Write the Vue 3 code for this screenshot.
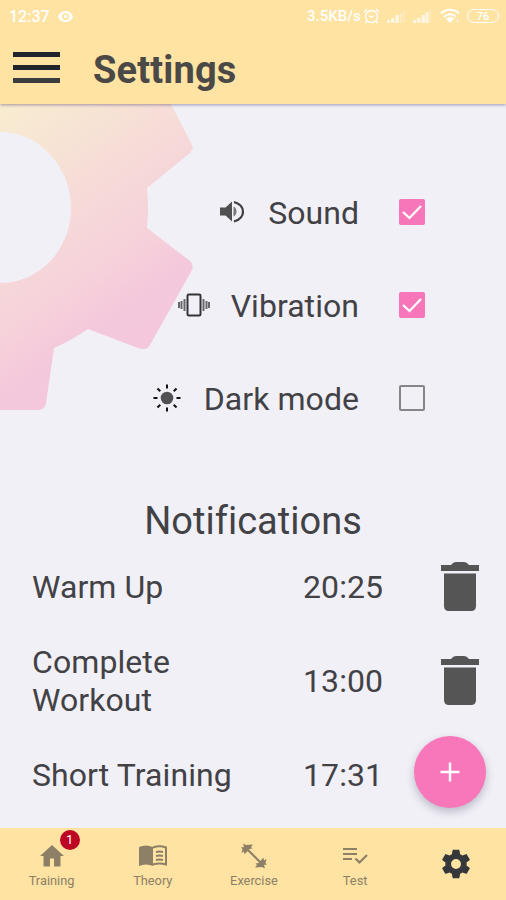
<script setup>
import { ref } from 'vue'

const options = ref([
  { label: 'Sound', icon: 'sound', on: true },
  { label: 'Vibration', icon: 'vibration', on: true },
  { label: 'Dark mode', icon: 'sun', on: false },
])
const notifications = [
  { name: 'Warm Up', time: '20:25', removable: true },
  { name: 'Complete Workout', time: '13:00', removable: true },
  { name: 'Short Training', time: '17:31', removable: false },
]
const tabs = [
  { label: 'Training', icon: 'home', badge: 1 },
  { label: 'Theory', icon: 'book' },
  { label: 'Exercise', icon: 'dumbbell' },
  { label: 'Test', icon: 'list' },
  { label: '', icon: 'gear' },
]
const rays = [0, 45, 90, 135, 180, 225, 270, 315]
</script>

<template>
  <div class="screen">
    <header class="top">
      <div class="status">
        <span class="clock">12:37</span>
        <svg class="eye" width="15" height="11" viewBox="0 0 15 11"><path fill="#fff" fill-rule="evenodd" d="M7.5 0C4 0 1.2 2.200 0 5.500c1.200 3.300 4 5.500 7.500 5.500s6.300-2.200 7.500-5.500C13.800 2.200 11 0 7.500 0zm0 9a3.500 3.500 0 1 1 0-7 3.500 3.500 0 0 1 0 7zm0-5.300a1.800 1.800 0 1 0 0 3.600 1.800 1.800 0 0 0 0-3.600z" /></svg>
        <span class="rate">3.5KB/s</span>
        <svg class="alarm" width="17" height="16" viewBox="0 0 17 16" fill="none" stroke="#fff" stroke-width="1.400"><circle cx="8.500" cy="8.500" r="6" /><path d="M1 4l3-3M16 4l-3-3M5.800 7.500l2.700 2 2.700-2M4 13l-1.300 2M13 13l1.300 2" /></svg>
        <svg class="signal" width="19" height="13" viewBox="0 0 19 13" fill="#fff"><path d="M0 10h3v3H0zM4 8h3.500v5H4zM8.500 5H12v8H8.500z" /><path opacity=".4" d="M13 3h2.500v10H13zM16.500 0H18v13h-1.500z" /></svg>
        <svg class="signal second" width="19" height="13" viewBox="0 0 19 13" fill="#fff"><path d="M0 10h3v3H0zM4 8h3.500v5H4zM8.500 5H12v8H8.500zM12.500 2h3v11h-3z" /><path opacity=".4" d="M16.500 0H18v13h-1.500z" /></svg>
        <svg class="wifi" width="20" height="16" viewBox="0 0 20 16" fill="none" stroke="#fff" stroke-width="2"><path d="M1 5.500c5-5 13-5 18 0M4 8.700c3.500-3.300 8.500-3.300 12 0" /><path fill="#fff" stroke="none" d="M5.800 10.600c2.600-2 5.800-2 8.400 0L10 15z" /><path stroke-width="1.200" opacity=".6" d="M17.500 11v4" /></svg>
        <span class="battery">76</span>
      </div>
      <div class="bar">
        <div class="burger"><i /><i /><i /></div>
        <h1>Settings</h1>
      </div>
    </header>

    <main class="content">
      <svg class="cog" width="200" height="310" viewBox="0 104 200 310">
        <defs>
          <linearGradient id="cogFill" gradientUnits="userSpaceOnUse" x1="0" y1="104" x2="156" y2="320">
            <stop offset="0" stop-color="#f8edd0" />
            <stop offset=".45" stop-color="#f6dbd8" />
            <stop offset=".72" stop-color="#f6d1da" />
            <stop offset=".9" stop-color="#f4c8dc" />
            <stop offset="1" stop-color="#f4c7dd" />
          </linearGradient>
        </defs>
        <path fill="url(#cogFill)" fill-rule="evenodd" d="M0 104H171L192 145Q194 149 190 153L147 188Q149 208 147 228L190 261Q194 265 192 270L150 345Q147 351 138 348L88 329Q72 340 54 348L46 403Q45 410 38 410H0ZM0 132V283C40 283 71 249 71 208S40 132 0 132Z" />
      </svg>

      <section class="options">
        <label v-for="o in options" :key="o.label" class="option">
          <svg v-if="o.icon === 'sound'" class="sound" width="32" height="28" viewBox="0 0 32 28"><path fill="#505052" d="M4 9.500h5.500l6.500-6v20l-6.500-6H4z" /><path fill="#77777a" d="M17.500 8.500c4 1.800 4 8.200 0 10z" /><path fill="none" stroke="#3d3d40" stroke-width="2.200" d="M18 4c12 3.500 12 16 0 19.500" /></svg>
          <svg v-else-if="o.icon === 'vibration'" width="32" height="28" viewBox="0 0 32 28" fill="none"><rect x="9.500" y="3.500" width="13" height="21" rx="1.200" stroke="#343436" stroke-width="2" /><path stroke="#68686b" stroke-width="2" d="M6.500 8v12M3.500 10v8M25.500 8v12M28.500 10v8M1 11v6M31 11v6" /></svg>
          <svg v-else width="32" height="28" viewBox="0 0 32 28"><circle cx="16" cy="14" r="6.300" fill="#515154" /><path v-for="r in rays" :key="r" d="M16 .500v4" stroke="#111" stroke-width="2" :transform="`rotate(${r} 16 14)`" /></svg>
          <span class="option-label">{{ o.label }}</span>
          <input v-model="o.on" type="checkbox" class="native" />
          <span class="check" :class="{ on: o.on }">
            <svg v-if="o.on" width="26" height="26" viewBox="0 0 26 26" fill="none" stroke="#fff" stroke-width="2.300"><path d="M4 13l6.500 6L22 7" /></svg>
          </span>
        </label>
      </section>

      <section class="notifications">
        <h2>Notifications</h2>
        <div v-for="n in notifications" :key="n.name" class="row">
          <span class="name">{{ n.name }}</span>
          <span class="time">{{ n.time }}</span>
          <svg v-if="n.removable" class="trash" width="38" height="50" viewBox="0 0 38 50" fill="#555556"><path d="M0 3h10q2-3 5-3h8q3 0 5 3h10v6H0zM3 11.500h32V44q0 5-5 5H8q-5 0-5-5z" /></svg>
        </div>
      </section>
    </main>

    <button class="fab" aria-label="Add">
      <svg width="20" height="20" viewBox="0 0 20 20" stroke="#fff" stroke-width="2.400"><path d="M10 .500v19M.500 10h19" /></svg>
    </button>

    <nav class="tabs">
      <div v-for="t in tabs" :key="t.icon" class="tab" :class="t.icon">
        <div class="tab-icon">
          <svg v-if="t.icon === 'home'" width="24" height="22" viewBox="0 0 24 22"><path fill="#8d8067" d="M12 0l12 11h-3.500v10.500H14v-8h-4v8H3.500V11H0z" /></svg>
          <svg v-else-if="t.icon === 'book'" width="30" height="22" viewBox="0 0 30 22"><path fill="#8d8067" d="M1 2Q8-1 15 2v19Q8 18 1 21z" /><path fill="none" stroke="#8d8067" stroke-width="2" d="M15 2.500q6.500-2.500 13 0v17q-6.500-2-13 0M18 7q3.500-1 7 0M18 11q3.500-1 7 0M18 15q3.500-1 7 0" /></svg>
          <svg v-else-if="t.icon === 'dumbbell'" width="28" height="28" viewBox="0 0 28 28" fill="#8d8067" stroke="#8d8067"><path stroke-width="2.200" d="M7 7l14 14" /><path stroke="none" d="M3 1.500l3 1.500 7-.500-2 2.500 1.500 1.500-3 .500L4.500 12.500 4 9.500 1.500 11l1-4L1 5.500l3-.500zM25 26.500l-3-1.500-7 .500 2-2.500-1.500-1.500 3-.500 5-5.500.500 3 2.500-1.500-1 4 1.500 1.500-3 .500z" /></svg>
          <svg v-else-if="t.icon === 'list'" width="26" height="20" viewBox="0 0 26 20" fill="none" stroke="#8d8067" stroke-width="2.200"><path d="M1 3h14M1 8h14M1 13h9M13.500 12.500l4 4L25 9" /></svg>
          <svg v-else width="34" height="34" viewBox="0 0 24 24"><path fill="#36373b" fill-rule="evenodd" d="M19.430 12.980c.04-.32.07-.64.07-.98s-.03-.66-.07-.98l2.110-1.650c.19-.15.24-.42.12-.64l-2-3.460c-.12-.22-.39-.3-.61-.22l-2.490 1c-.52-.4-1.080-.73-1.690-.98l-.38-2.650C14.460 2.180 14.250 2 14 2h-4c-.25 0-.46.18-.49.42l-.38 2.650c-.61.25-1.170.59-1.690.98l-2.490-1c-.23-.09-.49 0-.61.22l-2 3.460c-.13.22-.07.49.12.64l2.110 1.650c-.04.32-.07.65-.07.98s.03.66.07.98l-2.110 1.650c-.19.15-.24.42-.12.64l2 3.460c.12.22.39.3.61.22l2.490-1c.52.4 1.080.73 1.690.98l.38 2.650c.03.24.24.42.49.42h4c.25 0 .46-.18.49-.42l.38-2.650c.61-.25 1.170-.59 1.690-.98l2.490 1c.23.09.49 0 .61-.22l2-3.460c.12-.22.07-.49-.12-.64l-2.110-1.650zM12 15.500a3.500 3.500 0 1 1 0-7 3.500 3.500 0 0 1 0 7z" /></svg>
          <span v-if="t.badge" class="badge">{{ t.badge }}</span>
        </div>
        <span v-if="t.label" class="tab-label">{{ t.label }}</span>
      </div>
    </nav>
  </div>
</template>

<style>
body { margin: 0; }
</style>

<style scoped>
* { box-sizing: border-box; }
.screen {
  position: relative;
  display: flex;
  flex-direction: column;
  width: 506px;
  height: 900px;
  overflow: hidden;
  background: #f1f0f7;
  color: #424246;
  font-family: Roboto, "Liberation Sans", sans-serif;
}
.top {
  position: relative;
  z-index: 1;
  flex: none;
  height: 104px;
  background: #fee3a2;
  box-shadow: 0 1px 3px rgba(80, 60, 110, .5);
}
.status {
  display: flex;
  align-items: center;
  height: 32px;
  padding: 0 7px 0 9px;
  color: #fff;
  font-size: 15px;
  font-weight: 500;
}
.clock { width: 42px; font-size: 16px; }
.eye { margin-left: 7px; }
.rate { margin-left: auto; width: 53px; white-space: nowrap; }
.alarm { margin-left: 3px; }
.signal { margin-left: 7px; opacity: .7; }
.wifi { margin-left: 8px; }
.battery {
  display: flex;
  align-items: center;
  justify-content: center;
  width: 32px;
  height: 14px;
  margin-left: 7px;
  border: 1.500px solid #fff;
  border-radius: 7px;
  font-size: 11px;
}
.bar { display: flex; align-items: center; height: 72px; padding-left: 13px; }
.burger { display: flex; flex-direction: column; gap: 8px; width: 47px; margin-top: -1px; }
.burger i { height: 5px; background: #20242c; }
.burger i:last-child { background: #3b3c3d; }
h1 { margin: 3px 0 0 33px; font-size: 38px; line-height: 44px; font-weight: 700; letter-spacing: .15px; color: #4b4947; }
.content { position: relative; flex: 1; min-height: 0; }
.cog { position: absolute; left: 0; top: 0; }
.options { position: relative; padding: 62px 81px 0 0; }
.option { display: flex; align-items: center; justify-content: flex-end; height: 92.700px; }
.sound { margin-right: -1px; }
.option-label { margin: 2px 40px 0 21px; font-size: 32px; line-height: 38px; letter-spacing: .05px; }
.native { position: absolute; opacity: 0; pointer-events: none; }
.check { display: block; width: 26px; height: 26px; border: 2px solid #858588; border-radius: 2px; }
.check.on { border: 0; background: #f776ba; }
.check svg { display: block; }
.notifications { position: relative; }
h2 { margin: 54px 0 0; text-align: center; font-size: 38px; font-weight: 400; line-height: 46px; letter-spacing: .01px; font-variant-ligatures: common-ligatures; }
.row {
  display: grid;
  grid-template-columns: 271px 138px 38px;
  align-items: center;
  height: 94px;
  padding-left: 32px;
  font-size: 32px;
  line-height: 38px;
  letter-spacing: .08px;
}
h2 + .row { margin-top: -4px; }
.name { max-width: 210px; }
.fab {
  position: absolute;
  z-index: 2;
  right: 20px;
  bottom: 92px;
  display: flex;
  align-items: center;
  justify-content: center;
  width: 72px;
  height: 72px;
  padding: 0;
  border: 0;
  border-radius: 50%;
  background: #f877ba;
  box-shadow: 0 4px 8px rgba(60, 60, 90, .3);
}
.tabs {
  position: relative;
  z-index: 1;
  flex: none;
  display: grid;
  grid-template-columns: repeat(5, 101.200px);
  height: 72px;
  padding-left: 1px;
  background: #fee3a2;
}
.tab { display: flex; flex-direction: column; align-items: center; padding-top: 12px; }
.tab-icon { position: relative; display: flex; align-items: center; justify-content: center; height: 32px; }
.tab-label { margin-top: 1px; color: #8d8067; font-size: 12.800px; line-height: 16px; }
.gear { padding-top: 20px; }
.badge {
  position: absolute;
  left: 20px;
  top: -10px;
  width: 20px;
  height: 20px;
  border-radius: 50%;
  background: #bd0625;
  color: #fff;
  font-size: 13px;
  line-height: 20px;
  text-align: center;
}
</style>
